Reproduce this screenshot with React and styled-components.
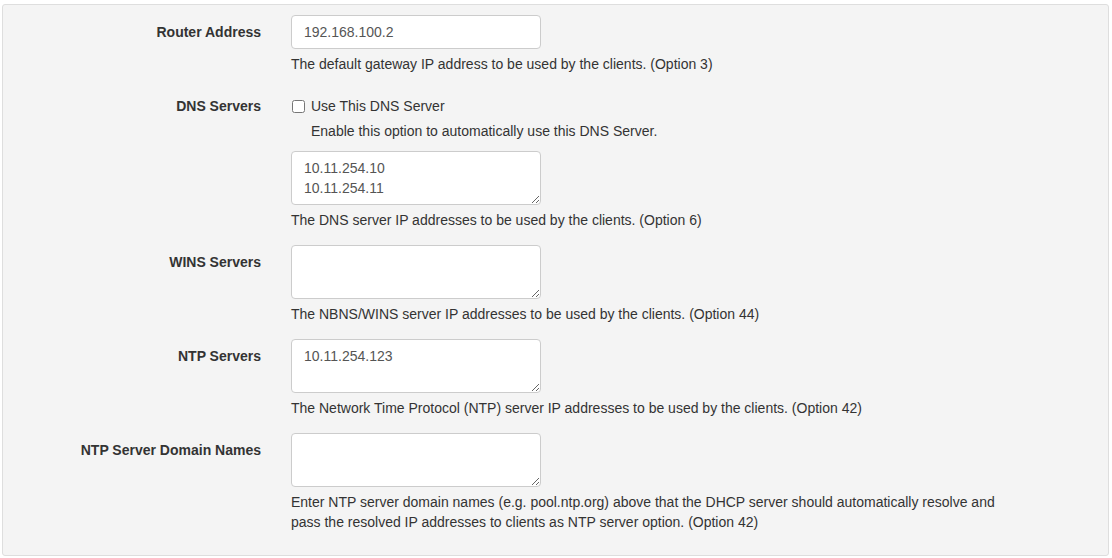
import React from 'react'
import styled, { createGlobalStyle } from 'styled-components'

const GlobalStyle = createGlobalStyle`
  html, body {
    margin: 0;
    padding: 0;
    background: #ffffff;
  }
  body {
    font-family: "Liberation Sans", Arial, sans-serif;
    font-size: 14px;
    line-height: 20px;
    color: #333333;
  }
  * {
    box-sizing: border-box;
  }
`

const Panel = styled.div`
  margin: 4px 3px 2px 2px;
  height: 552px;
  background-color: #f4f4f4;
  border: 1px solid #dedede;
  border-radius: 3px;
  padding: 10px 0 0 0;
`

const Row = styled.div`
  display: grid;
  grid-template-columns: 273px 735px;
  margin-bottom: 15px;
`

const Label = styled.label`
  padding: 7px 15px 0 0;
  text-align: right;
  font-weight: bold;
  color: #333333;
`

const Field = styled.div`
  padding-left: 15px;
  display: flex;
  flex-direction: column;
  align-items: flex-start;
`

const TextInput = styled.input`
  width: 250px;
  height: 34px;
  padding: 6px 12px;
  font-family: inherit;
  font-size: 14px;
  line-height: 20px;
  color: #555555;
  background: #ffffff;
  border: 1px solid #cccccc;
  border-radius: 4px;
  outline: none;
`

const TextArea = styled.textarea`
  display: block;
  width: 250px;
  height: 54px;
  margin: ${p => (p.$gapTop ? '10px 0 0 0' : '0')};
  padding: 6px 12px;
  font-family: inherit;
  font-size: 14px;
  line-height: 20px;
  color: #555555;
  background: #ffffff;
  border: 1px solid #cccccc;
  border-radius: 4px;
  outline: none;
  resize: vertical;
`

const Help = styled.p`
  margin: 5px 0 0 0;
  color: #333333;
`

const CheckLabel = styled.label`
  display: flex;
  align-items: center;
  padding-top: 7px;
  height: 27px;
  color: #333333;
`

const Check = styled.input`
  width: 13px;
  height: 13px;
  margin: 0 6px 0 1px;
`

const CheckHelp = styled.div`
  margin-top: 5px;
  padding-left: 20px;
`

const App = () => {
  return (
    <>
      <GlobalStyle />
      <Panel>
        <Row>
          <Label>Router Address</Label>
          <Field>
            <TextInput defaultValue="192.168.100.2" />
            <Help>The default gateway IP address to be used by the clients. (Option 3)</Help>
          </Field>
        </Row>

        <Row>
          <Label>DNS Servers</Label>
          <Field>
            <CheckLabel>
              <Check type="checkbox" />
              Use This DNS Server
            </CheckLabel>
            <CheckHelp>Enable this option to automatically use this DNS Server.</CheckHelp>
            <TextArea $gapTop rows={2} defaultValue={'10.11.254.10\n10.11.254.11'} />
            <Help>The DNS server IP addresses to be used by the clients. (Option 6)</Help>
          </Field>
        </Row>

        <Row>
          <Label>WINS Servers</Label>
          <Field>
            <TextArea rows={2} defaultValue="" />
            <Help>The NBNS/WINS server IP addresses to be used by the clients. (Option 44)</Help>
          </Field>
        </Row>

        <Row>
          <Label>NTP Servers</Label>
          <Field>
            <TextArea rows={2} defaultValue="10.11.254.123" />
            <Help>The Network Time Protocol (NTP) server IP addresses to be used by the clients. (Option 42)</Help>
          </Field>
        </Row>

        <Row>
          <Label>NTP Server Domain Names</Label>
          <Field>
            <TextArea rows={2} defaultValue="" />
            <Help>
              Enter NTP server domain names (e.g. pool.ntp.org) above that the DHCP server should automatically resolve and
              pass the resolved IP addresses to clients as NTP server option. (Option 42)
            </Help>
          </Field>
        </Row>
      </Panel>
    </>
  )
}

export default App
